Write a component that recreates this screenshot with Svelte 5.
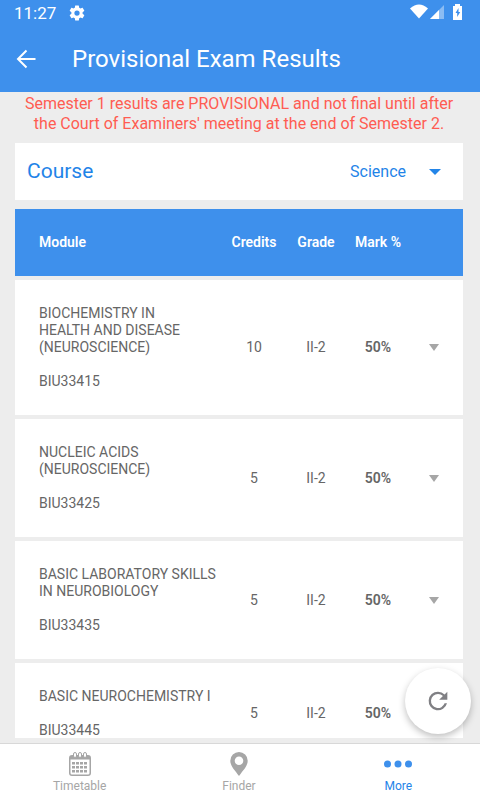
<script lang="ts">
  type Result = { code: string; name: string; credits: number; grade: string; mark: number };

  const results: Result[] = [
    { code: "BIU33415", name: "BIOCHEMISTRY IN\nHEALTH AND DISEASE (NEUROSCIENCE)", credits: 10, grade: "II-2", mark: 50 },
    { code: "BIU33425", name: "NUCLEIC ACIDS (NEUROSCIENCE)", credits: 5, grade: "II-2", mark: 50 },
    { code: "BIU33435", name: "BASIC LABORATORY SKILLS IN NEUROBIOLOGY", credits: 5, grade: "II-2", mark: 50 },
    { code: "BIU33445", name: "BASIC NEUROCHEMISTRY I", credits: 5, grade: "II-2", mark: 50 },
  ];

  let course = $state("Science");
  let open = $state<string | null>(null);

  function toggle(code: string) {
    open = open === code ? null : code;
  }
</script>

<div class="screen">
  <header>
    <div class="status">
      <span class="clock">11:27</span>
      <svg class="gear" width="18" height="18" viewBox="0 0 24 24" aria-hidden="true">
        <path fill="#fff" d="M19.43 12.98c.04-.32.07-.64.07-.98s-.03-.66-.07-.98l2.11-1.65c.19-.15.24-.42.12-.64l-2-3.46c-.12-.22-.39-.3-.61-.22l-2.49 1c-.52-.4-1.08-.73-1.69-.98l-.38-2.65A.49.49 0 0 0 14 2h-4c-.25 0-.46.18-.49.42l-.38 2.65c-.61.25-1.17.59-1.69.98l-2.49-1c-.23-.09-.49 0-.61.22l-2 3.46c-.13.22-.07.49.12.64l2.11 1.65c-.04.32-.07.65-.07.98s.03.66.07.98l-2.11 1.65c-.19.15-.24.42-.12.64l2 3.46c.12.22.39.3.61.22l2.49-1c.52.4 1.08.73 1.69.98l.38 2.65c.03.24.24.42.49.42h4c.25 0 .46-.18.49-.42l.38-2.65c.61-.25 1.17-.59 1.69-.98l2.49 1c.23.09.49 0 .61-.22l2-3.46c.12-.22.07-.49-.12-.64zM12 15.5a3.5 3.5 0 1 1 0-7 3.5 3.5 0 0 1 0 7z" />
      </svg>
      <svg class="signal" width="54" height="18" viewBox="0 0 54 18" aria-hidden="true">
        <path fill="#fff" d="M0 4.5Q9 -3.5 18 4.5L9 14.500z" />
        <path fill="#fff" opacity=".4" d="M34 1v14H20z" />
        <path fill="#fff" d="M29 6v9h-9z" />
        <path fill="#fff" d="M43 2h2V0h5v2h2v14h-9z" />
        <path fill="#3e90ec" d="M48.500 4l-3 5h1.700v4l3-5h-1.700z" />
      </svg>
    </div>
    <div class="bar">
      <button class="back" aria-label="Back">
        <svg width="20" height="20" viewBox="0 0 20 20" aria-hidden="true">
          <path d="M19.500 10H2M10.500 1.500L2 10l8.500 8.500" fill="none" stroke="#fff" stroke-width="2" />
        </svg>
      </button>
      <h1>Provisional Exam Results</h1>
    </div>
  </header>

  <main>
    <p class="notice">
      Semester 1 results are PROVISIONAL and not final until after the Court of Examiners' meeting at the end of Semester 2.
    </p>

    <div class="course">
      <label for="course">Course</label>
      <select id="course" bind:value={course}>
        <option>Science</option>
      </select>
      <svg width="12" height="6" viewBox="0 0 12 6" aria-hidden="true"><path fill="#2385e8" d="M0 0h12L6 6z" /></svg>
    </div>

    <table>
      <thead>
        <tr>
          <th class="module">Module</th>
          <th class="num">Credits</th>
          <th class="num">Grade</th>
          <th class="num">Mark %</th>
          <th class="more"></th>
        </tr>
      </thead>
      <tbody>
        {#each results as r (r.code)}
          <tr>
            <td class="module">
              <div class="name">{r.name}</div>
              <div class="code">{r.code}</div>
            </td>
            <td>{r.credits}</td>
            <td>{r.grade}</td>
            <td class="mark">{r.mark}%</td>
            <td class="more">
              <button aria-label="Details for {r.code}" aria-expanded={open === r.code} onclick={() => toggle(r.code)}>
                <svg width="10" height="7" viewBox="0 0 10 7" aria-hidden="true"><path fill="#a6a6a6" d="M0 0h10L5 7z" /></svg>
              </button>
            </td>
          </tr>
        {/each}
      </tbody>
    </table>
  </main>

  <button class="refresh" aria-label="Refresh">
    <svg width="28" height="28" viewBox="0 0 24 24" aria-hidden="true">
      <path fill="#808084" d="M17.650 6.350A7.960 7.960 0 0 0 12 4a8 8 0 1 0 7.730 10h-2.080A6 6 0 1 1 12 6c1.660 0 3.140.69 4.220 1.780L13 11h7V4z" />
    </svg>
  </button>

  <nav>
    <a href="#timetable">
      <svg width="22" height="24" viewBox="0 0 22 24" aria-hidden="true">
        <path fill="#a6a6a6" fill-rule="evenodd" d="M3 3h16a3 3 0 0 1 3 3v15a3 3 0 0 1-3 3H3a3 3 0 0 1-3-3V6a3 3 0 0 1 3-3zM1.500 7.500v13.500a1.500 1.500 0 0 0 1.500 1.500h16a1.500 1.500 0 0 0 1.500-1.500V7.500z" />
        <g fill="#fff" stroke="#a6a6a6">
          <rect x="4.500" y=".5" width="3" height="5" rx="1.500" />
          <rect x="9.500" y=".5" width="3" height="5" rx="1.500" />
          <rect x="14.500" y=".5" width="3" height="5" rx="1.500" />
        </g>
        {#each [10, 14, 18] as y}
          {#each [3, 7, 11, 15] as x}
            <rect {x} {y} width="3" height="2.500" fill="#a6a6a6" />
          {/each}
        {/each}
      </svg>
      <span>Timetable</span>
    </a>
    <a href="#finder">
      <svg width="18" height="24" viewBox="0 0 18 24" aria-hidden="true">
        <path fill="#a6a6a6" fill-rule="evenodd" d="M9 0a8.700 8.700 0 0 0-8.700 8.700C.3 14 5 18.500 9 24c4-5.500 8.700-10 8.700-15.300A8.700 8.700 0 0 0 9 0zm0 4.400a4.300 4.300 0 1 1 0 8.600 4.300 4.300 0 0 1 0-8.600z" />
      </svg>
      <span>Finder</span>
    </a>
    <a href="#more" class="active" aria-current="page">
      <svg width="30" height="24" viewBox="0 0 30 24" aria-hidden="true">
        <g fill="#3e90ec">
          <circle cx="4.500" cy="12" r="3.500" />
          <circle cx="15" cy="12" r="3.500" />
          <circle cx="25.500" cy="12" r="3.500" />
        </g>
      </svg>
      <span>More</span>
    </a>
  </nav>
</div>

<style>
  :global(body) {
    margin: 0;
    background: #ededed;
  }

  .screen {
    position: relative;
    display: flex;
    flex-direction: column;
    height: 100vh;
    background: #ededed;
    color: #666;
    font-family: Roboto, "Liberation Sans", sans-serif;
    font-size: 14px;
    line-height: 17px;
  }

  button {
    display: grid;
    place-items: center;
    padding: 0;
    border: 0;
    background: none;
    cursor: pointer;
  }

  header {
    background: #3e90ec;
    color: #fff;
  }

  .status {
    display: flex;
    align-items: center;
    height: 26px;
    padding: 0 16px 0 14px;
  }

  .clock {
    font-size: 17px;
  }

  .gear {
    margin-left: 12px;
  }

  .signal {
    margin-left: auto;
  }

  .bar {
    display: flex;
    align-items: center;
    height: 66px;
    padding: 0 16px;
  }

  .back {
    width: 20px;
    height: 40px;
  }

  h1 {
    margin: 0 0 0 36px;
    font-size: 24px;
    font-weight: 400;
    line-height: 32px;
  }

  main {
    flex: 1;
    min-height: 0;
    margin-bottom: 5px;
    padding: 0 17px 0 15px;
    overflow-y: auto;
    scrollbar-width: none;
  }

  .notice {
    margin: 2px 0 9px;
    color: #ff5c52;
    font-size: 16px;
    line-height: 20px;
    text-align: center;
  }

  .course {
    display: flex;
    align-items: center;
    height: 57px;
    margin-bottom: 5px;
    padding: 0 22px 0 12px;
    background: #fff;
    color: #1f84e8;
  }

  .course label {
    font-size: 21px;
  }

  .course select {
    flex: 1;
    margin-right: 23px;
    border: 0;
    background: none;
    appearance: none;
    color: inherit;
    font: inherit;
    font-size: 16px;
    line-height: 24px;
    text-align: right;
    text-align-last: right;
  }

  table {
    width: 100%;
    border-collapse: separate;
    border-spacing: 0 4px;
    table-layout: fixed;
  }

  th,
  td {
    padding: 25px 0;
    text-align: center;
  }

  th {
    background: #3e90ec;
    color: #fff;
    font-weight: 600;
  }

  td {
    background: #fff;
  }

  .num {
    width: 62px;
  }

  .module {
    padding-left: 24px;
    text-align: left;
  }

  .name {
    white-space: pre-line;
  }

  .code {
    margin-top: 17px;
  }

  .mark {
    font-weight: 600;
  }

  .more {
    width: 50px;
    padding-right: 4px;
  }

  .more button {
    width: 100%;
    height: 17px;
  }

  .refresh {
    position: absolute;
    right: 9px;
    bottom: 66px;
    width: 66px;
    height: 66px;
    border-radius: 50%;
    background: #fff;
    box-shadow: 0 3px 7px rgba(0, 0, 0, 0.25);
  }

  nav {
    display: flex;
    height: 56px;
    padding-right: 2px;
    border-top: 1px solid #d8d8d8;
    background: #fff;
  }

  nav a {
    display: flex;
    flex: 1;
    flex-direction: column;
    align-items: center;
    padding-top: 8px;
    color: #a6a6a6;
    font-size: 12px;
    line-height: 20px;
    text-decoration: none;
  }

  nav .active {
    color: #1f84e8;
  }
</style>
